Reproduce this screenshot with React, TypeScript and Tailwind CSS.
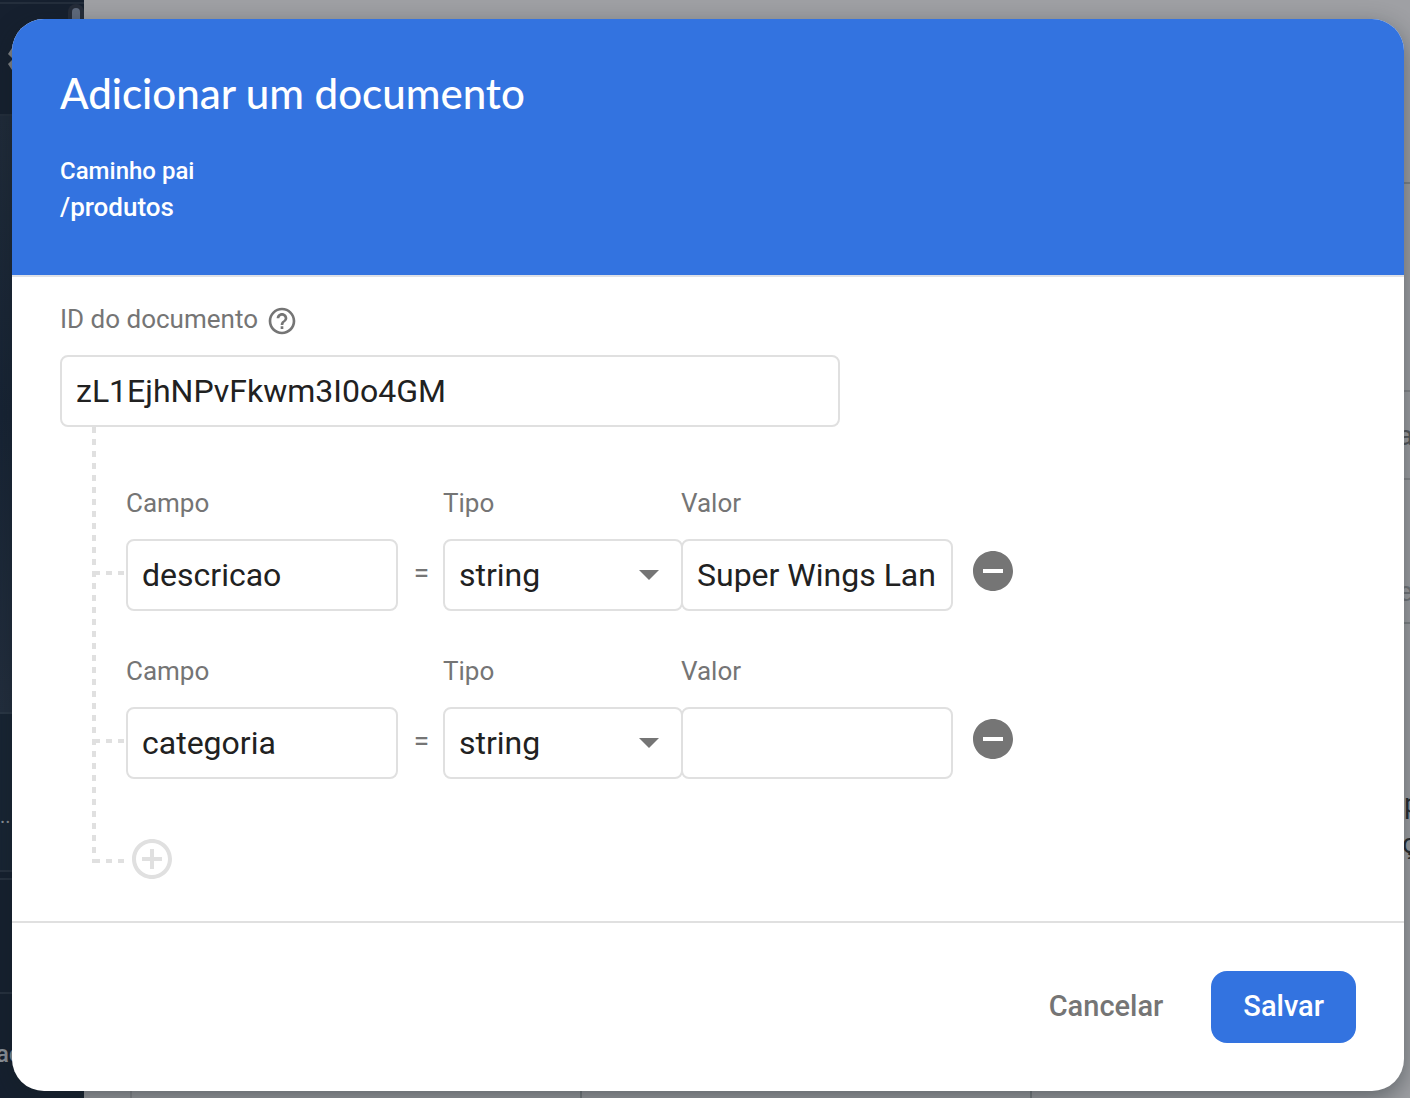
import { useState } from "react";
import {
  MdAddCircleOutline,
  MdArrowDropDown,
  MdHelpOutline,
  MdRemoveCircle,
} from "react-icons/md";

type Field = { id: number; name: string; type: string; value: string };

const initialFields: Field[] = [
  { id: 1, name: "descricao", type: "string", value: "Super Wings Lançador" },
  { id: 2, name: "categoria", type: "string", value: "" },
];

const fieldTypes = ["string", "number", "boolean", "map", "array", "null", "timestamp", "geopoint", "reference"];

const box =
  "block h-18 rounded-lg border-2 border-[#e0e0e0] bg-white px-3.5 text-[32px] text-[#212121] outline-none focus:border-[#3373e0]";
const label = "block h-6 text-[26px] leading-6 text-[#757575]";

function Backdrop() {
  return (
    <div className="absolute inset-0 flex overflow-hidden bg-[#9fa0a4]" aria-hidden="true">
      <div className="flex w-21 shrink-0 flex-col bg-[#16202f] text-[#8f949b]">
        <div className="h-1 border-b-2 border-[#242e3c]" />
        <div className="flex h-28 justify-between border-b-2 border-[#242e3c]">
          <svg viewBox="0 0 12 24" className="mt-11 ml-2 h-6 w-3 fill-[#85878a]">
            <path d="M0 6 4 0h8v10H4Z M0 16l4-4h8v10H4Z" />
          </svg>
          <div className="flex h-28 w-4 justify-center rounded-t-full bg-[#252c39] pt-1">
            <div className="w-2 rounded-full bg-[#606b7d]" />
          </div>
        </div>
        <div className="h-[598px] border-b-2 border-[#2b3746] bg-linear-to-b from-[#202b3a] via-[#172334] to-[#232e3e]" />
        <div className="h-[158px] border-b-2 border-[#27313f] bg-[#182433] pt-22 text-xl">..</div>
        <div className="h-2 border-b-2 border-[#27313f]" />
        <div className="h-[114px] border-b-2 border-[#27313f]" />
        <div className="-ml-1 pt-12 text-2xl leading-6 font-medium">ações</div>
      </div>
      <div className="flex grow items-end">
        <div className="h-14 w-12 border-r-2 border-[#8c8d91]" />
        <div className="h-14 w-[450px] border-r-2 border-[#7c8084]" />
        <div className="h-14 w-[450px] border-r-2 border-[#7c8084]" />
      </div>
      <div className="flex w-2 shrink-0 flex-col text-2xl leading-10 text-[#27292d]">
        <div className="h-46 border-b-2 border-[#7f858a]" />
        <div className="h-24" />
        <div className="h-28 border-b-2 border-[#87888c]" />
        <div className="-ml-1 h-22 border-b-2 border-[#87888c] pt-6 text-[28px] text-[#55575b]">a</div>
        <div className="-ml-1 h-36 border-b-2 border-[#808487] pt-23 text-[28px] text-[#74777b]">e</div>
        <div className="pt-40 pl-0.5 text-[28px]">p</div>
        <div className="text-[28px]">ç</div>
      </div>
    </div>
  );
}

export default function App() {
  const [fields, setFields] = useState(initialFields);

  const update = (id: number, patch: Partial<Field>) =>
    setFields((all) => all.map((f) => (f.id === id ? { ...f, ...patch } : f)));
  const remove = (id: number) => setFields((all) => all.filter((f) => f.id !== id));
  const add = () =>
    setFields((all) => [...all, { id: Date.now(), name: "", type: "string", value: "" }]);

  return (
    <div className="relative flex min-h-screen flex-col pt-[19px] pr-1.5 pb-[7px] pl-3 font-['Roboto',sans-serif]">
      <Backdrop />
      <form
        role="dialog"
        aria-labelledby="dialog-title"
        onSubmit={(e) => e.preventDefault()}
        className="relative flex grow flex-col overflow-hidden rounded-[32px] bg-white shadow-[0_8px_24px_rgba(20,30,36,0.45)]"
      >
        <header className="border-b-2 border-[#dfe1e6] bg-[#3373e0] bg-clip-padding px-12 py-12 font-medium text-white">
          <h1 id="dialog-title" className="font-['Lato',sans-serif] text-[42px] leading-13 font-medium">
            Adicionar um documento
          </h1>
          <p className="mt-9 text-2xl leading-8">Caminho pai</p>
          <p className="text-[26px] leading-10">/produtos</p>
        </header>

        <div className="grow px-12 pt-6 pb-[42px]">
          <div className="flex h-10 items-center gap-2">
            <label htmlFor="document-id" className="pb-1 text-[26px] leading-9 text-[#757575]">
              ID do documento
            </label>
            <button type="button" aria-label="Ajuda" className="text-[#757575]">
              <MdHelpOutline className="size-8" />
            </button>
          </div>
          <input
            id="document-id"
            defaultValue="zL1EjhNPvFkwm3I0o4GM"
            className={`${box} mt-3.5 w-full max-w-[780px]`}
          />

          <div className="ml-8 flex flex-col gap-12 bg-[repeating-linear-gradient(to_bottom,#e0e0e0_0_6px,transparent_6px_12px)] bg-size-[4px_calc(100%-24px)] bg-no-repeat pt-16">
            {fields.map((f) => (
              <div key={f.id} className="flex items-end">
                <div className="mb-9 ml-0.5 h-1 w-8 bg-[repeating-linear-gradient(to_right,#e0e0e0_0_6px,transparent_6px_12px)]" />
                <div className="flex w-[272px] flex-col gap-6">
                  <label htmlFor={`name-${f.id}`} className={label}>Campo</label>
                  <input
                    id={`name-${f.id}`}
                    value={f.name}
                    onChange={(e) => update(f.id, { name: e.target.value })}
                    className={`${box} w-full`}
                  />
                </div>
                <span className="mb-6 w-[45px] pl-0.5 text-center text-[28px] leading-7 text-[#757575]">=</span>
                <div className="flex w-60 flex-col gap-6">
                  <label htmlFor={`type-${f.id}`} className={label}>Tipo</label>
                  <div className="relative">
                    <select
                      id={`type-${f.id}`}
                      value={f.type}
                      onChange={(e) => update(f.id, { type: e.target.value })}
                      className={`${box} w-full appearance-none`}
                    >
                      {fieldTypes.map((t) => (
                        <option key={t}>{t}</option>
                      ))}
                    </select>
                    <MdArrowDropDown className="pointer-events-none absolute top-[11px] right-2.5 size-12 text-[#757575]" />
                  </div>
                </div>
                <div className="-ml-0.5 flex w-[272px] flex-col gap-6">
                  <label htmlFor={`value-${f.id}`} className={label}>Valor</label>
                  <input
                    id={`value-${f.id}`}
                    value={f.value}
                    onChange={(e) => update(f.id, { value: e.target.value })}
                    className={`${box} w-full`}
                  />
                </div>
                <button
                  type="button"
                  aria-label="Remover campo"
                  onClick={() => remove(f.id)}
                  className="mb-4 ml-4 text-[#757575]"
                >
                  <MdRemoveCircle className="size-12" />
                </button>
              </div>
            ))}
            <div className="mt-3 flex h-10 items-center">
              <div className="mt-1 h-1 w-2 bg-[#e0e0e0]" />
              <div className="mt-1 mr-1 h-1 w-6 bg-[repeating-linear-gradient(to_right,transparent_0_6px,#e0e0e0_6px_12px)]" />
              <button type="button" aria-label="Adicionar campo" onClick={add} className="text-[#e0e0e0]">
                <MdAddCircleOutline className="size-12" />
              </button>
            </div>
          </div>
        </div>

        <footer className="flex justify-end gap-4 border-t-2 border-[#e0e0e0] p-12 text-[29px] font-medium">
          <button type="button" className="h-18 rounded-2xl px-8 text-[#757575]">
            Cancelar
          </button>
          <button type="submit" className="h-18 rounded-2xl bg-[#3373e0] px-8 text-white">
            Salvar
          </button>
        </footer>
      </form>
    </div>
  );
}
